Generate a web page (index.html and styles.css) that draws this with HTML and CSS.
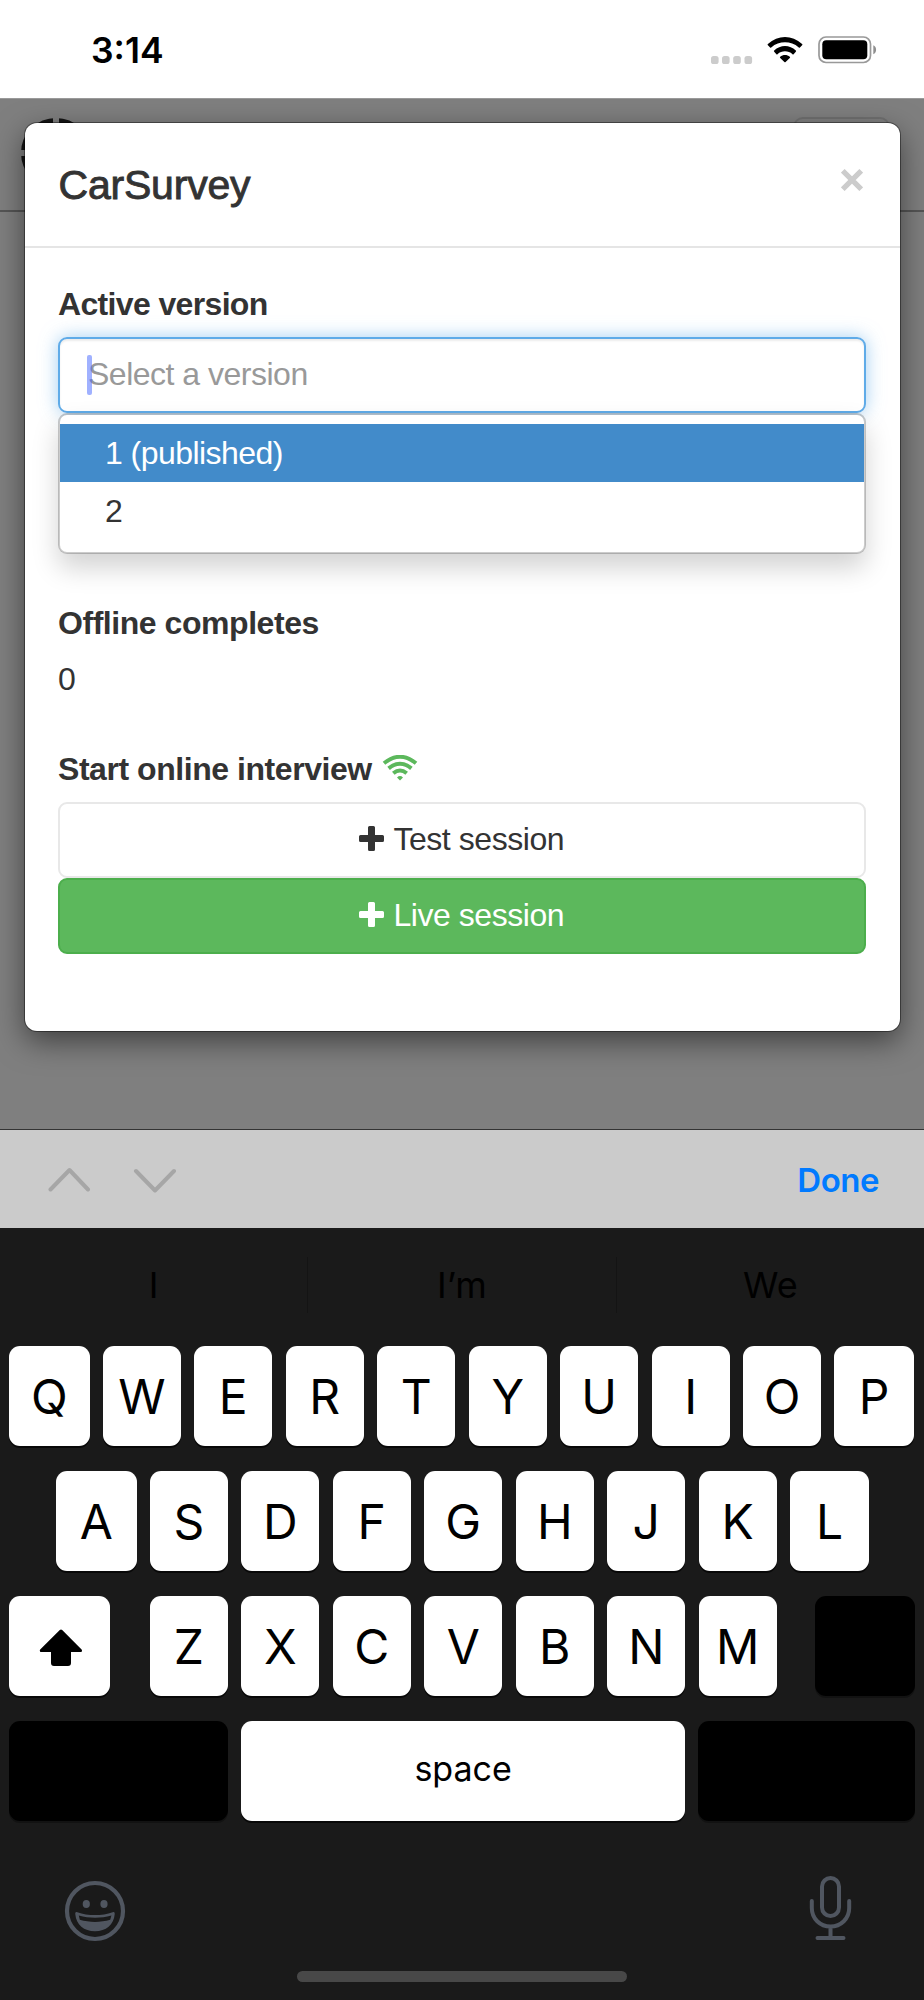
FILE: index.html
```html
<!DOCTYPE html>
<html lang="en">
<head>
<meta charset="utf-8">
<title>CarSurvey</title>
<link rel="stylesheet" href="styles.css">
</head>
<body>
<header class="status">
  <span class="clock">3:14</span>
  <div class="status-icons">
    <svg class="signal" width="42" height="8" viewBox="0 0 42 8"><rect width="7.6" height="8" rx="2.6"/><rect x="11" width="7.6" height="8" rx="2.6"/><rect x="22.2" width="7.6" height="8" rx="2.6"/><rect x="33.5" width="7.6" height="8" rx="2.6"/></svg>
    <svg class="wifi" width="36" height="28" viewBox="0 0 36 28"><path d="M.9 9.2a.8.8 0 0 1 0-1.2C11-1.4 25-1.4 35.1 8a.8.8 0 0 1 0 1.2l-2.200 2.200a.8.8 0 0 1-1.100 0C23.700 4.600 12.300 4.600 4.200 11.400a.8.8 0 0 1-1.100 0Z"/><path d="M7.200 15.800a.8.8 0 0 1 0-1.200c6-6.200 15.600-6.200 21.600 0a.8.8 0 0 1 0 1.200l-2.200 2.400a.8.8 0 0 1-1.100 0c-4.200-3.800-10.800-3.800-15 0a.8.8 0 0 1-1.100 0Z"/><path d="M13.200 22a.8.8 0 0 1 0-1.200c2.600-2.500 7-2.500 9.600 0a.8.8 0 0 1 0 1.200L18.600 26a.9.9 0 0 1-1.200 0Z"/></svg>
    <svg class="battery" width="60" height="28" viewBox="0 0 60 28"><rect x="1" y="1" width="51.500" height="25.500" rx="7" fill="none" stroke="#999" stroke-width="1.700"/><rect x="4.300" y="4.300" width="45" height="19" rx="4"/><path d="M55.300 9.300c3.700 1.500 3.700 7.500 0 9Z" fill="#8f8f8f"/></svg>
  </div>
</header>

<main class="page">
  <nav class="navbar">
    <svg class="logo" width="72" height="72" viewBox="0 0 72 72"><circle cx="36" cy="36" r="31"/><path d="M36 0V72M0 36H72"/></svg>
    <span class="toggler"></span>
  </nav>
  <section class="modal">
    <div class="modal-header">
      <h1 class="title">CarSurvey</h1>
      <svg class="close" width="22" height="22" viewBox="0 0 22 22"><path d="M1.800 1.800 20.200 20.200M20.200 1.800 1.800 20.200"/></svg>
    </div>
    <div class="modal-body">
      <div class="label label-version">Active version</div>
      <div class="select">
        <div class="input"><span class="caret"></span><span class="placeholder">Select a version</span></div>
        <div class="menu">
          <div class="option option-active">1 (published)</div>
          <div class="option">2</div>
        </div>
      </div>
      <div class="label">Offline completes</div>
      <div class="value">0</div>
      <div class="label label-online"><span>Start online interview</span>
        <svg width="36" height="26" viewBox="0 0 36 26"><path d="M2 8.300Q18-4.700 34 8.300M6.600 13.400Q18 4 29.400 13.400M11.300 18.300Q18 12.700 24.700 18.300" fill="none" stroke="#5cb85c" stroke-width="4"/><path d="M15 22.400Q18 19.800 21 22.400L18 25.600Z" fill="#5cb85c"/></svg>
      </div>
      <div class="btn"><svg class="plus" width="25" height="25" viewBox="0 0 25 25"><path d="M10.500 0h4a1.500 1.500 0 0 1 1.500 1.500V9h7.500a1.500 1.500 0 0 1 1.500 1.500v4a1.500 1.500 0 0 1-1.500 1.500H16v7.500a1.500 1.500 0 0 1-1.500 1.500h-4A1.500 1.500 0 0 1 9 23.500V16H1.500A1.500 1.500 0 0 1 0 14.500v-4A1.500 1.500 0 0 1 1.500 9H9V1.500A1.500 1.500 0 0 1 10.500 0Z"/></svg><span>Test session</span></div>
      <div class="btn btn-live"><svg class="plus" width="25" height="25" viewBox="0 0 25 25"><path d="M10.500 0h4a1.500 1.500 0 0 1 1.500 1.500V9h7.500a1.500 1.500 0 0 1 1.500 1.500v4a1.500 1.500 0 0 1-1.500 1.500H16v7.500a1.500 1.500 0 0 1-1.500 1.500h-4A1.500 1.500 0 0 1 9 23.500V16H1.500A1.500 1.500 0 0 1 0 14.500v-4A1.500 1.500 0 0 1 1.500 9H9V1.500A1.500 1.500 0 0 1 10.500 0Z"/></svg><span>Live session</span></div>
    </div>
  </section>
</main>

<div class="toolbar">
  <svg class="chevrons" width="128" height="26" viewBox="0 0 128 26"><path d="M2.500 22.500 21.500 3 40 22.500M88 4l19 19.500L126 4"/></svg>
  <span class="done">Done</span>
</div>

<section class="keyboard">
  <div class="suggestions"><span>I</span><span>I’m</span><span>We</span></div>
  <div class="keys">
    <div class="row"><b class="key first">Q</b><b class="key">W</b><b class="key">E</b><b class="key">R</b><b class="key">T</b><b class="key">Y</b><b class="key">U</b><b class="key">I</b><b class="key">O</b><b class="key last">P</b></div>
    <div class="row row-home"><b class="key first">A</b><b class="key">S</b><b class="key">D</b><b class="key">F</b><b class="key">G</b><b class="key">H</b><b class="key">J</b><b class="key">K</b><b class="key last">L</b></div>
    <div class="row">
      <b class="key shift"><svg width="44" height="38" viewBox="0 0 44 38"><path d="M20.800 1a1.700 1.700 0 0 1 2.400 0L42.600 20.600a1.500 1.500 0 0 1-1 2.500H32V34a3 3 0 0 1-3 3H15a3 3 0 0 1-3-3V23.100H2.200a1.500 1.500 0 0 1-1-2.500Z"/></svg></b>
      <b class="key">Z</b><b class="key">X</b><b class="key">C</b><b class="key">V</b><b class="key">B</b><b class="key">N</b><b class="key">M</b>
      <b class="key dark delete"></b>
    </div>
    <div class="row"><b class="key dark mode"></b><b class="key space">space</b><b class="key dark return"></b></div>
  </div>
  <div class="dock">
    <svg width="62" height="62" viewBox="0 0 62 62"><circle cx="31" cy="31" r="28" fill="none" stroke="#505660" stroke-width="4.200"/><ellipse cx="22.300" cy="24" rx="3.600" ry="4.100"/><ellipse cx="40" cy="24" rx="3.600" ry="4.100"/><path fill-rule="evenodd" d="M13.300 32.200c11 3.800 24.400 3.800 35.400 0 1.500-.5 2.200.4 2 2C49.800 44.500 42 51.300 31 51.300S12.200 44.500 11.300 34.200c-.2-1.600.5-2.500 2-2ZM14.800 35.500l1 4.300c9.500 2.800 20.900 2.800 30.400 0l1.200-4.300c-10.500 3-22.100 3-32.600 0Z"/></svg>
    <svg class="mic" width="44" height="66" viewBox="0 0 44 66"><rect x="13" y="3" width="17" height="38" rx="8.500"/><path d="M2.800 26v7c0 10.500 8.200 18.600 18.700 18.600S40.200 43.500 40.200 33v-7M21.500 51.600V63M8.500 63h26"/></svg>
  </div>
  <div class="home"></div>
</section>
</body>
</html>
```
FILE: styles.css
```css
* { box-sizing: border-box; }
body {
  margin: 0;
  width: 924px;
  height: 2000px;
  display: flex;
  flex-direction: column;
  overflow: hidden;
  background: #fff;
  font-family: "Liberation Sans", Arial, sans-serif;
  color: #333;
}
svg { display: block; flex: none; }

.status {
  height: 98px;
  padding: 3px 46px 0 91px;
  display: flex;
  justify-content: space-between;
  align-items: center;
  color: #000;
  font-family: Inter, sans-serif;
}
.clock { font-size: 35.500px; font-weight: 600; }
.status-icons { display: flex; align-items: flex-end; margin-top: -2px; }
.signal { fill: #ccc; margin-right: 14px; }
.wifi { margin-right: 15px; }

.page {
  height: 1031px;
  padding: 24px 24.500px 0 24.500px;
  background: #7f7f7f;
  position: relative;
  overflow: hidden;
  border-top: 1px solid #999;
}
.navbar {
  position: absolute;
  top: 0;
  left: 0;
  width: 924px;
  height: 113px;
  padding: 18px 34px 0 20px;
  display: flex;
  justify-content: space-between;
  border-bottom: 2px solid #555;
}
.logo circle { fill: none; stroke: #151515; stroke-width: 8; }
.logo path { stroke: #7f7f7f; stroke-width: 6; }
.toggler { width: 97px; height: 76px; border: 2px solid #707070; border-radius: 10px; }

.modal {
  position: relative;
  height: 908px;
  border-radius: 12px;
  background: #fff;
  background-clip: padding-box;
  box-shadow: 0 0 0 1px rgba(0, 0, 0, .4), 0 10px 30px rgba(0, 0, 0, .5);
}
.modal-header {
  height: 125px;
  padding: 0 37px 0 34px;
  display: flex;
  justify-content: space-between;
  border-bottom: 2px solid #e5e5e5;
}
.title {
  margin: 39px 0 0;
  font-size: 41px;
  line-height: 46px;
  font-weight: 400;
  letter-spacing: -.2px;
  -webkit-text-stroke: .9px #333;
}
.close { margin-top: 46px; fill: none; stroke: #ccc; stroke-width: 5.200; }
.modal-body { padding: 32.500px 34px 0 33.500px; }
.label { height: 46px; margin-bottom: 10px; font-size: 32px; line-height: 46px; font-weight: 700; letter-spacing: -.45px; }
.label-version { letter-spacing: -.65px; }
.label-online { display: flex; margin-top: 44px; gap: 10px; }
.label-online svg { margin-top: 9px; }
.value { height: 46px; font-size: 32px; line-height: 46px; }

.select { position: relative; margin-bottom: 187px; }
.input {
  height: 76px;
  padding: 0 28px;
  display: flex;
  align-items: center;
  position: relative;
  border: 2px solid #5fabe8;
  border-radius: 9px;
  box-shadow: inset 0 2px 2px rgba(0, 0, 0, .075), 0 0 18px rgba(102, 175, 233, .6);
  font-size: 32px;
  letter-spacing: -.5px;
  color: #999;
}
.caret { position: absolute; left: 27px; top: 16px; width: 5px; height: 40px; border-radius: 2px; background: rgba(65, 100, 255, .5); }
.menu {
  position: absolute;
  top: 76px;
  left: 0;
  width: 100%;
  height: 141px;
  padding-top: 9px;
  border: 2px solid rgba(0, 0, 0, .2);
  border-radius: 9px;
  background: #fff;
  background-clip: padding-box;
  box-shadow: 0 14px 27px rgba(0, 0, 0, .175);
}
.option { height: 58px; padding-left: 45px; font-size: 32px; line-height: 58px; letter-spacing: -.55px; }
.option-active { background: #428bca; color: #fff; }

.btn {
  height: 76px;
  display: flex;
  align-items: center;
  justify-content: center;
  gap: 9px;
  border: 2px solid #e8e8e8;
  border-radius: 9px;
  font-size: 32px;
  letter-spacing: -.45px;
}
.btn-live { border-color: #4cae4c; background: #5cb85c; color: #fff; }
.plus { fill: currentColor; margin-top: -2px; }

.toolbar {
  height: 99px;
  padding: 2px 45px 0 48px;
  display: flex;
  justify-content: space-between;
  align-items: center;
  border-top: 1px solid #333;
  background: #cbcbcb;
  font-family: Inter, sans-serif;
}
.chevrons { fill: none; stroke: #a6a6a6; stroke-width: 4; stroke-linecap: round; stroke-linejoin: round; }
.done { font-size: 33px; font-weight: 600; letter-spacing: -.5px; color: #007aff; }

.keyboard { flex: 1; background: #1a1a1a; color: #000; font-family: Inter, sans-serif; }
.suggestions { height: 118px; padding-top: 29px; display: flex; }
.suggestions span { flex: 1; height: 56px; display: flex; align-items: center; justify-content: center; font-size: 36px; }
.suggestions span + span { border-left: 1px solid #141414; }
.keys { display: flex; flex-direction: column; gap: 25px; padding-left: 9px; }
.row { display: flex; gap: 13.100px; }
.row-home { padding-left: 47px; }
.key {
  flex: none;
  width: 78.400px;
  height: 100px;
  display: flex;
  align-items: center;
  justify-content: center;
  border-radius: 11px;
  background: #fff;
  box-shadow: 0 2px 0 #080808;
  font-size: 48px;
  font-weight: 400;
}
.first { width: 80.500px; }
.last { width: 79.400px; }
.dark { background: #000; box-shadow: 0 2px 0 #121212; }
.shift { width: 100.500px; margin-right: 27px; }
.shift svg { margin-top: 3px; margin-left: 3px; }
.delete { width: 100px; margin-left: 25px; }
.mode { width: 219px; }
.space { width: 444px; padding-bottom: 6px; font-size: 34px; }
.return { width: 216.500px; }
.dock { height: 150px; padding: 59px 71px 0 64px; display: flex; justify-content: space-between; fill: #505660; }
.mic { margin-top: -5px; fill: none; stroke: #505660; stroke-width: 4; stroke-linecap: round; }
.home { width: 330px; height: 11px; margin: 0 auto; border-radius: 6px; background: #484848; }
```
